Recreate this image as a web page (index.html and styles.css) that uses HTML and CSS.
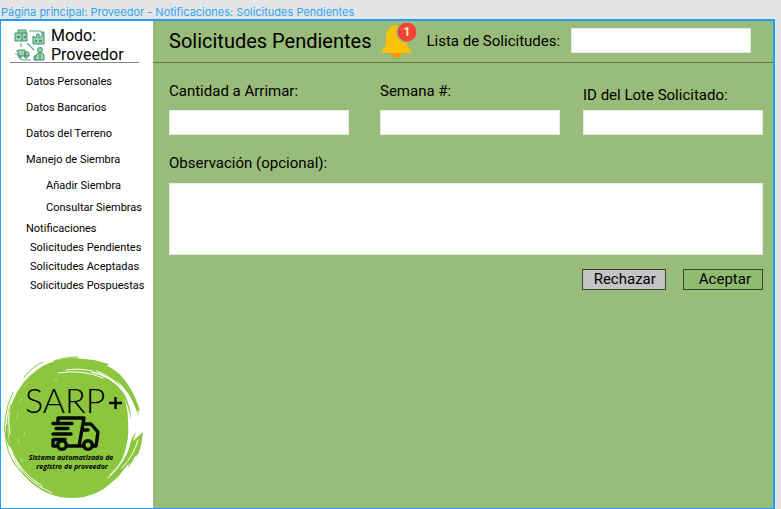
FILE: index.html
```html
<!DOCTYPE html>
<html lang="es">
<head>
<meta charset="utf-8">
<title>Solicitudes Pendientes</title>
<link rel="stylesheet" href="styles.css">
</head>
<body>
<div class="frame-title">Página principal: Proveedor - Notificaciones: Solicitudes Pendientes</div>
<div class="frame">
  <aside class="sidebar">
    <div class="mode">
      <svg class="mode-icon" viewBox="0 0 32 32" aria-hidden="true">
        <g fill="#9bd6a0" stroke="#3f8f83" stroke-width="1">
          <path d="M1 4h12v8H1zM4 4V1h8v3M8 4v8"/>
          <path d="M19 15V7l3 2 1-4h2v4l3-2V3h2v12z"/>
          <path d="M4 21h7v6H4zM11 23h3l1 2v2h-4z"/>
          <circle cx="6" cy="28" r="1.3"/><circle cx="12" cy="28" r="1.3"/>
          <circle cx="26" cy="21" r="2.5"/>
          <path d="M22 31v-5l2-2h4l2 2v5zM22 27h-2v4h4M26 25v6"/>
        </g>
        <g fill="none" stroke="#5da397" stroke-width="1.1">
          <path d="M15 2h11l2 2M7 14v4M13 14l7 7M6 30l3 1h8M2 22h2M1 25h3"/>
        </g>
        <path d="M3 8h3M10 8h2M21 12h2M25 12h3" stroke="#2f7f78" stroke-width="1.5"/>
      </svg>
      <div class="mode-name">Modo:<br>Proveedor</div>
    </div>
    <nav>
      <ul class="menu">
        <li><a href="#">Datos Personales</a></li>
        <li><a href="#">Datos Bancarios</a></li>
        <li><a href="#">Datos del Terreno</a></li>
        <li><a href="#">Manejo de Siembra</a>
          <ul class="submenu">
            <li><a href="#">Añadir Siembra</a></li>
            <li><a href="#">Consultar Siembras</a></li>
          </ul>
        </li>
        <li class="notices"><a href="#">Notificaciones</a>
          <ul class="notice-list">
            <li><a href="#">Solicitudes Pendientes</a></li>
            <li><a href="#">Solicitudes Aceptadas</a></li>
            <li><a href="#">Solicitudes Pospuestas</a></li>
          </ul>
        </li>
      </ul>
    </nav>
    <svg class="logo" viewBox="2 354 150 148" role="img" aria-label="SARP+ Sistema automatizado de registro de proveedor">
      <path fill="#8cc63f" d="M8 426C9 388 38 358 74 358L94 360L109 364L107 366C122 372 134 390 140 411L138 410L139 416L135 407C131 396 125 388 116 380C125 390 130 405 131 418L128 416L130 430L132 427L130 441L136 432L133 441L143 432C142 443 140 452 136 458L137 454L128 468L129 463L118 477L112 482C102 492 88 498 72 498C36 498 8 468 8 426Z"/>
      <g fill="none" stroke="#8cc63f" stroke-linecap="round">
        <path stroke-width="1" d="M13 392Q1 418 6 441Q9 461 24 475Q34 486 47 491M11 404Q5 420 8 440M24 377Q33 366 43 362M54 361Q65 357 78 357"/>
        <path stroke-width="2" d="M7 426Q5 438 11 448"/>
      </g>
      <g fill="none" stroke="#fff" stroke-linecap="round">
        <path stroke-width="1" d="M58 373Q83 369 103 378M66 370Q80 368 92 371M14 457Q24 481 52 493M10 447Q18 471 42 486M9 412Q8 424 10 434"/>
        <path stroke-width="1.500" d="M92 372Q112 376 123 391Q130 400 133 414"/>
        <path stroke-width="1" d="M97 371Q117 379 129 397M131 436Q129 457 110 475M129 447Q125 462 108 478M138 440Q134 455 122 468"/>
      </g>
      <path fill="#fff" d="M119 389Q128 401 128 421Q130 440 122 460Q131 447 133 432L130 415Q127 401 119 389Z"/>
      <g stroke="#fff" stroke-width=".6" opacity=".6">
        <path d="M18 412l-1 8M22 398l-2 4M25 432l-1 4M18 438l1 6M28 383l-4 4M54 380l4-1M21 458l2 4M35 481l4 2"/>
      </g>
      <text class="brand" x="25" y="413">SARP</text>
      <path stroke="#000" stroke-width="2.4" d="M109 403h13M115.500 397v12"/>
      <g fill="none" stroke="#050a05" stroke-width="3.400" stroke-linejoin="round" stroke-linecap="round">
        <path d="M58 422V418H84L79 446H68M56 446H53V440M83 424H91L98 432L96 446H93M84 446H79M82 430H88"/>
        <path d="M53 423.500H72M56 428.500H68M53 434H71M54 439.500H65"/>
        <circle cx="62" cy="445" r="4.300"/><circle cx="88" cy="445" r="4.300"/>
      </g>
      <g class="motto"><text x="71" y="460">Sistema automatizado de</text><text x="72" y="469">registro de proveedor</text></g>
    </svg>
  </aside>
  <main class="content">
    <header class="topbar">
      <h1>Solicitudes Pendientes</h1>
      <svg class="bell" viewBox="0 0 36 36" aria-hidden="true">
        <path fill="#ff9800" d="M10 29h11a5.500 6 0 0 1-11 0z"/>
        <path fill="#ffc107" d="M15 2C9 3 5 8 5 14v6c0 3-1 4-3 6-2 2-1 4 1 4h25c2 0 3-2 1-4-2-2-3-3-3-6V14C26 7 22 3 15 2z"/>
        <circle cx="26" cy="9" r="11" fill="#9abc7a"/>
        <circle cx="26" cy="9" r="9.500" fill="#f44336"/>
        <text class="bell-count" x="26" y="13">1</text>
      </svg>
      <label for="lista">Lista de Solicitudes:</label>
      <input id="lista" type="text">
    </header>
    <form class="request">
      <div class="fields">
        <div class="field"><label for="cantidad">Cantidad a Arrimar:</label><input id="cantidad" type="text"></div>
        <div class="field"><label for="semana">Semana #:</label><input id="semana" type="text"></div>
        <div class="field field-lot"><label for="lote">ID del Lote Solicitado:</label><input id="lote" type="text"></div>
      </div>
      <label for="observacion">Observación (opcional):</label>
      <textarea id="observacion"></textarea>
      <div class="actions">
        <button class="reject" type="button">Rechazar</button>
        <button class="accept" type="button">Aceptar</button>
      </div>
    </form>
  </main>
</div>
</body>
</html>
```
FILE: styles.css
```css
* { box-sizing: border-box; }
body {
  margin: 0;
  min-height: 100vh;
  display: flex;
  flex-direction: column;
  background: #e5e5e5;
  color: #000;
  font-family: Roboto, sans-serif;
}
.frame-title {
  height: 19px;
  padding: 4px 1px 0;
  font: 11px/16px Inter, sans-serif;
  color: #2fa5f5;
  white-space: nowrap;
}
.frame {
  flex: 1;
  display: flex;
  margin-right: 6px;
  border: 2px solid #1fa0f5;
  border-left-width: 1px;
  border-bottom-width: 1px;
}
.sidebar {
  flex: 0 0 152px;
  display: flex;
  flex-direction: column;
  background: #fff;
}
.mode {
  display: flex;
  gap: 5px;
  height: 42px;
  margin: 0 14px 0 9px;
  padding: 5px 0 0 4px;
  border-bottom: 1px solid #888;
}
.mode-icon { width: 32px; height: 32px; margin-top: 3px; }
.mode-name { font-size: 16px; line-height: 19px; }
ul { margin: 0; padding: 0; list-style: none; }
a { color: inherit; text-decoration: none; }
.menu { margin-top: 6px; padding-left: 25px; font-size: 11px; line-height: 26px; white-space: nowrap; }
.submenu { padding: 2px 0 0 20px; line-height: 22px; }
.notices { line-height: 19px; }
.notice-list { padding-left: 4px; }
.logo { width: 150px; height: 148px; margin: auto 0 6px 1px; }
.brand { font: 300 34px Lato, sans-serif; }
.motto { font: italic 700 7px "Open Sans", sans-serif; text-anchor: middle; }
.content { flex: 1; background: #9abc7a; }
.topbar {
  display: flex;
  align-items: center;
  height: 42px;
  padding: 0 22px 2px 16px;
  border-bottom: 1px solid #617a4d;
}
h1 { margin: 0; font-size: 20px; font-weight: 400; white-space: nowrap; }
.bell { width: 36px; height: 36px; margin-left: 10px; }
.bell-count { font: 700 12px Roboto, sans-serif; fill: #fff3b0; text-anchor: middle; }
label { font-size: 15px; line-height: 20px; white-space: nowrap; }
.topbar label { margin-left: 9px; }
input, textarea {
  display: block;
  border: 1px solid #e4eedc;
  border-radius: 0;
  background: #fff;
  padding: 2px 6px;
  font: 15px Roboto, sans-serif;
}
input { width: 180px; height: 25px; }
.topbar input { margin-left: auto; }
.request { padding: 18px 10px 16px 16px; }
.fields {
  display: grid;
  grid-template-columns: 211fr 203fr 180fr;
  margin-bottom: 18px;
}
.field { display: flex; flex-direction: column; gap: 9px; }
.field-lot { padding-top: 4px; gap: 5px; }
textarea { width: 100%; height: 72px; margin-top: 10px; resize: none; }
.actions { display: flex; justify-content: flex-end; gap: 17px; margin-top: 14px; }
button {
  height: 21px;
  border: 1px solid #35472b;
  padding: 0 9px 0 11px;
  font: 15px/19px Roboto, sans-serif;
  color: #000;
}
.reject { background: #c4c4c4; }
.accept { background: #90bc70; padding-left: 15px; padding-right: 11px; }
```
